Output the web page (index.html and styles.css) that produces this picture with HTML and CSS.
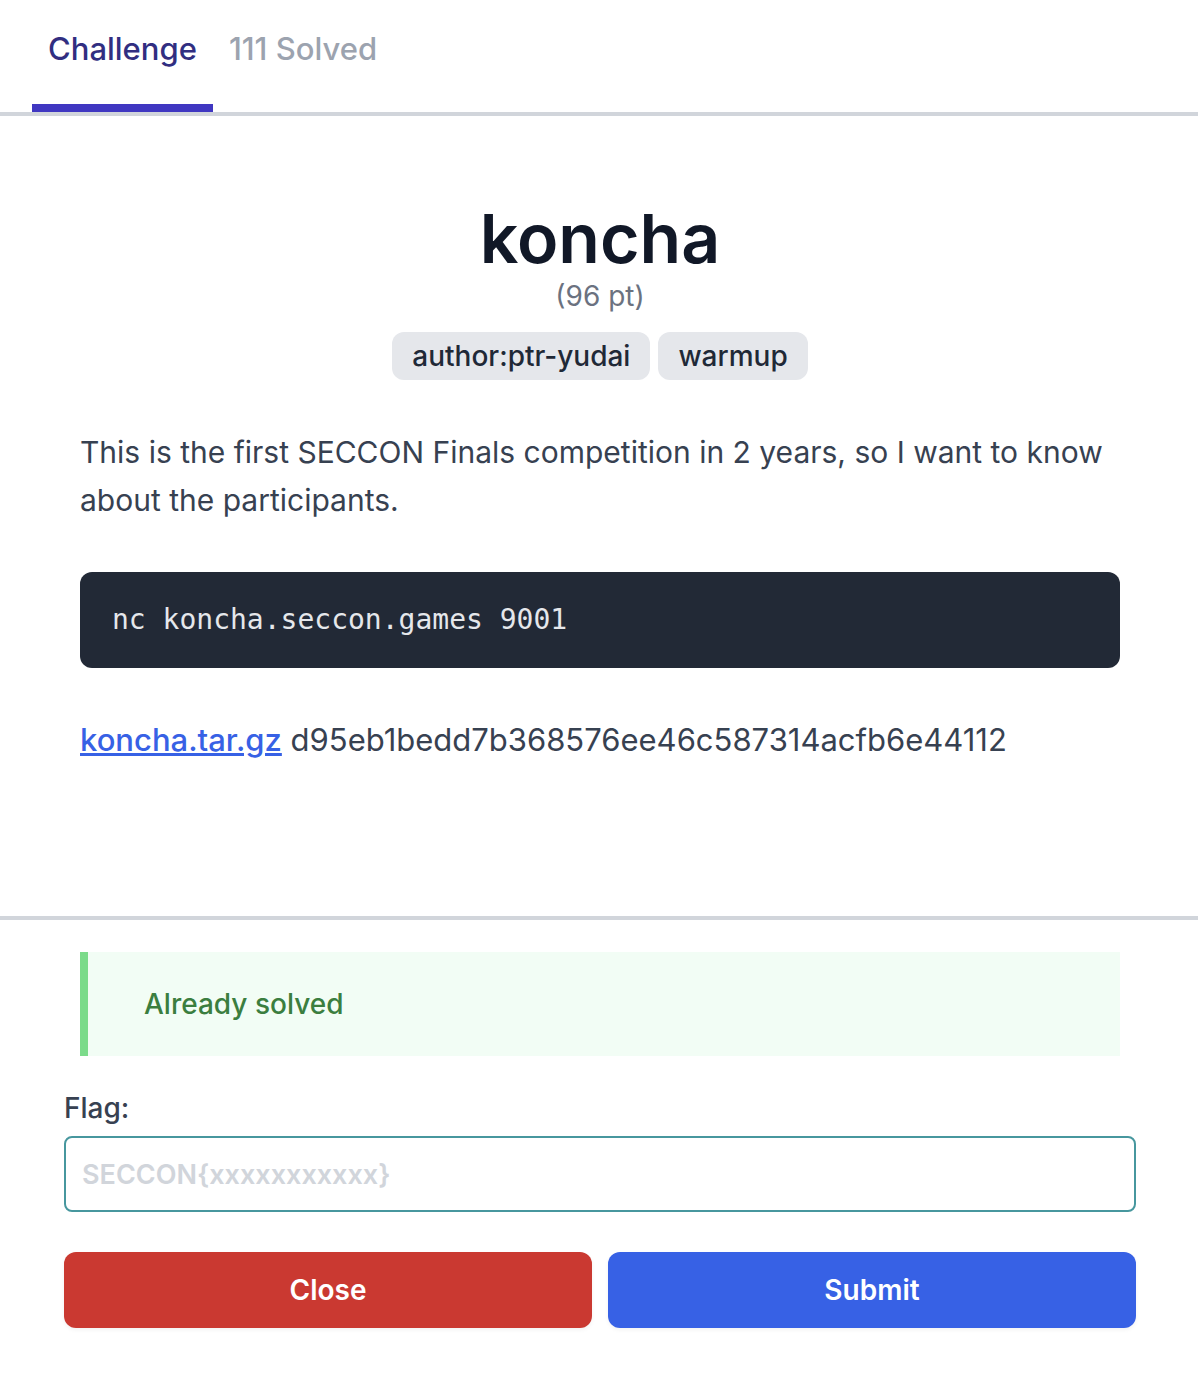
FILE: index.html
```html
<!DOCTYPE html>
<html lang="en">
<head>
<meta charset="utf-8">
<meta name="viewport" content="width=device-width, initial-scale=1">
<title>koncha</title>
<link rel="stylesheet" href="styles.css">
</head>
<body>
<nav class="tabs">
  <button type="button" class="tab tab-active">Challenge</button>
  <button type="button" class="tab">111 Solved</button>
</nav>
<main class="challenge">
  <header class="heading">
    <h1 class="title">koncha</h1>
    <p class="points">(96 pt)</p>
    <div class="tags">
      <span class="tag">author:ptr-yudai</span>
      <span class="tag">warmup</span>
    </div>
  </header>
  <p class="text">This is the first SECCON Finals competition in 2 years, so I want to know about the participants.</p>
  <pre class="code"><code>nc koncha.seccon.games 9001</code></pre>
  <p class="file"><a class="link" href="#">koncha.tar.gz</a> d95eb1bedd7b368576ee46c587314acfb6e44112</p>
</main>
<form class="submission">
  <p class="notice">Already solved</p>
  <label class="label" for="flag">Flag:</label>
  <input class="flag" id="flag" type="text" placeholder="SECCON{xxxxxxxxxxx}">
  <div class="actions">
    <button type="button" class="button button-close">Close</button>
    <button type="submit" class="button button-submit">Submit</button>
  </div>
</form>
</body>
</html>
```

FILE: styles.css
```css
*, *::before, *::after {
  box-sizing: border-box;
}

body {
  margin: 0;
  background: #fff;
  color: #374151;
  font-family: Inter, "Liberation Sans", sans-serif;
  font-size: 31px;
  line-height: 48px;
}

h1, p, pre {
  margin: 0;
}

button, input {
  font: inherit;
}

.tabs {
  display: flex;
  padding: 0 32px;
  border-bottom: 4px solid #d1d5db;
}

.tab {
  padding: 25px 16px 31px;
  border: 0;
  border-bottom: 8px solid transparent;
  background: none;
  color: #9ca3af;
  font-weight: 500;
}

.tab-active {
  border-bottom-color: #4037c1;
  color: #312e81;
}

.challenge {
  display: flex;
  flex-direction: column;
  gap: 48px;
  padding: 80px 78px 152px 80px;
}

.heading {
  display: flex;
  flex-direction: column;
  align-items: center;
}

.title {
  padding-top: 4px;
  color: #111827;
  font-size: 68px;
  font-weight: 600;
  line-height: 76px;
}

.points {
  color: #6b7280;
  font-size: 28px;
  line-height: 40px;
}

.tags {
  display: flex;
  gap: 8px;
  margin-top: 16px;
}

.tag {
  padding: 4px 20px;
  border-radius: 12px;
  background: #e5e7eb;
  color: #1f2937;
  font-size: 28px;
  font-weight: 500;
  line-height: 40px;
}

.text {
  font-size: 30px;
}

.code {
  padding: 24px 32px;
  border-radius: 12px;
  background: #222936;
  color: #e5e7eb;
  font-size: 28px;
}

.code code {
  font-family: "DejaVu Sans Mono", monospace;
}

.link {
  color: #3761e5;
  font-weight: 500;
  text-decoration-thickness: 3px;
}

.submission {
  display: flex;
  flex-direction: column;
  padding: 32px 62px 60px 64px;
  border-top: 4px solid #d1d5db;
  font-size: 28px;
  font-weight: 500;
  line-height: 40px;
}

.notice {
  margin: 0 16px 32px;
  padding: 32px 56px;
  border-left: 8px solid #7bdb8a;
  background: #f2fdf5;
  color: #3b7e3f;
}

.label {
  margin-bottom: 8px;
}

.flag {
  width: 100%;
  height: 76px;
  padding: 16px;
  border: 2px solid #47979e;
  border-radius: 8px;
  background: #fff;
  color: #374151;
  font-size: 27px;
  font-weight: 600;
}

.flag::placeholder {
  color: #d1d5db;
}

.actions {
  display: grid;
  grid-template-columns: 1fr 1fr;
  gap: 16px;
  margin-top: 40px;
}

.button {
  padding: 18px;
  border: 0;
  border-radius: 12px;
  color: #fff;
  font-weight: 600;
  box-shadow: 0 2px 4px rgba(0, 0, 0, 0.05);
}

.button-close {
  background: #ca3931;
}

.button-submit {
  background: #3761e5;
}
```
